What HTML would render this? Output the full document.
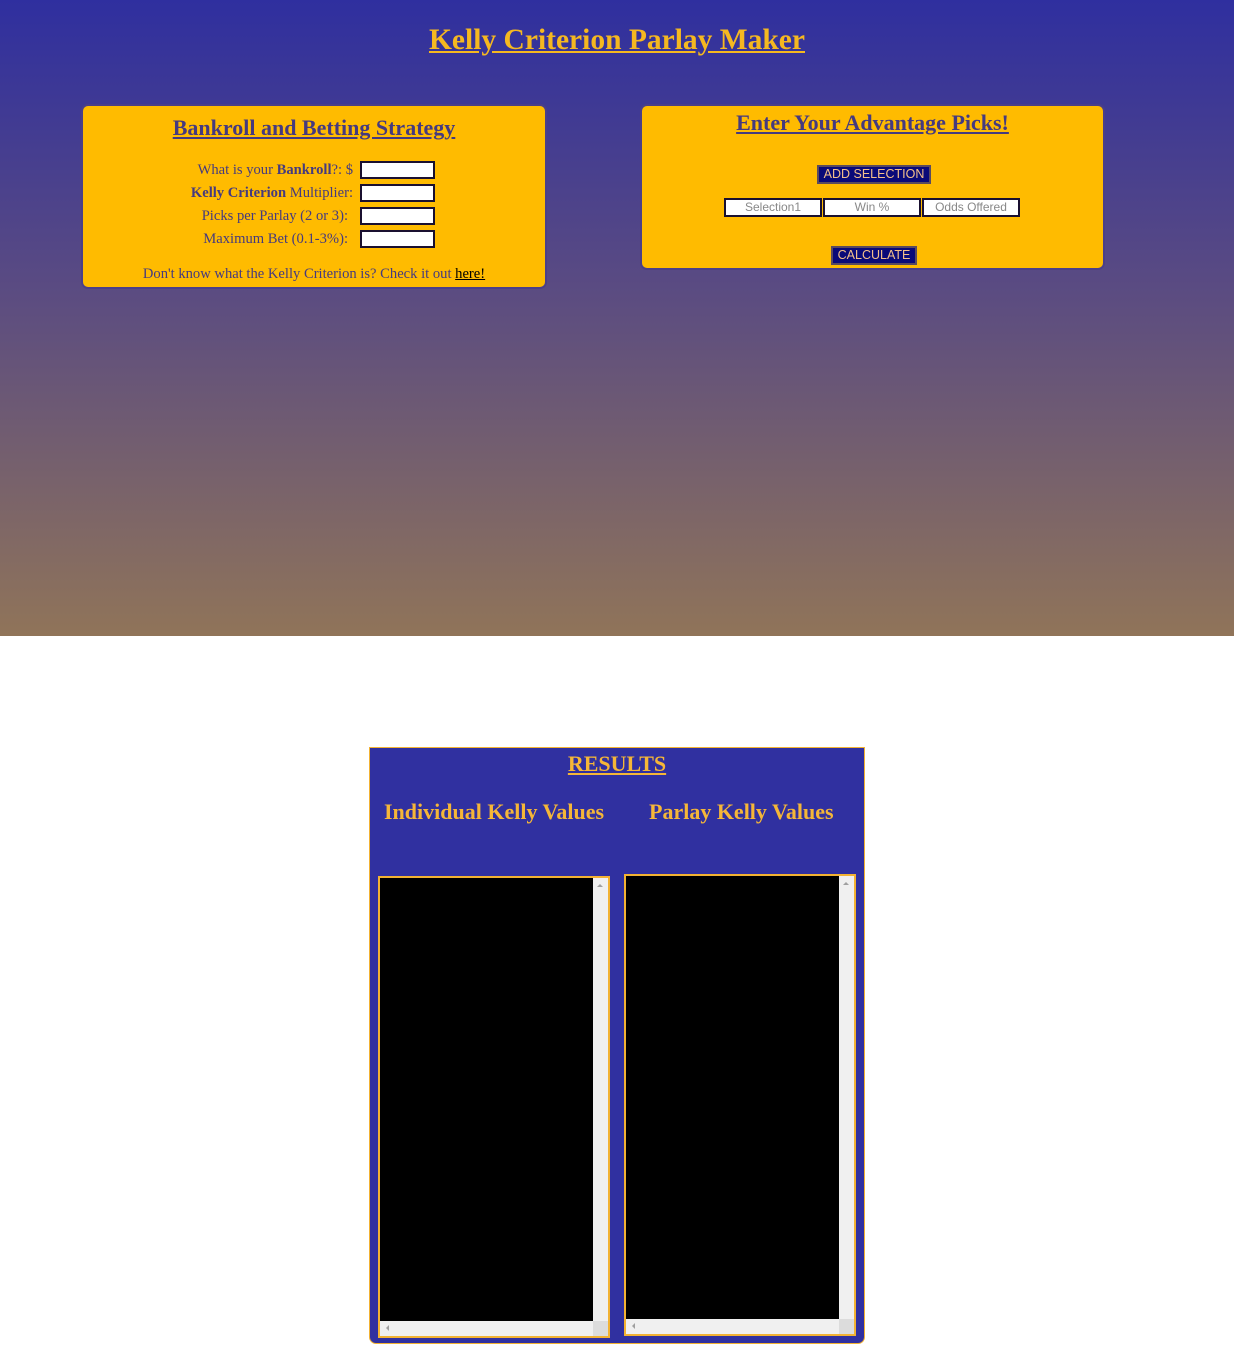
<!DOCTYPE html>
<html><head><style>
body{margin:0;width:1234px;height:1352px;position:relative;background:#fff;font-family:"Liberation Serif",serif;overflow:hidden}
.bg{position:absolute;left:0;top:0;width:1234px;height:636px;background:linear-gradient(#2f2f9f,#5a4b82 45%,#907459)}
.a{position:absolute}
h1{position:absolute;left:0;width:1234px;top:24px;margin:0;text-align:center;color:#f5b820;font-size:29.5px;font-weight:bold;text-decoration:underline}
.box{position:absolute;background:#ffbb00;border:2px solid #4b3f88;border-radius:7px;box-sizing:border-box}
.h2{position:absolute;left:0;right:0;text-align:center;color:#453a7f;font-size:22px;font-weight:bold;text-decoration:underline}
.lbl{position:absolute;color:#453a7f;font-size:14.6px;text-align:right;width:270px;left:0}
.in{position:absolute;left:277px;width:75px;height:18px;background:#fff;border:2px solid #1a1030;box-sizing:border-box}
.btn{position:absolute;background:#0a0a78;border:2px solid #5a4a60;color:#f4c08a;font-family:"Liberation Sans",sans-serif;font-size:12.5px;text-align:center;box-sizing:border-box;line-height:15px}
.pi{position:absolute;top:92px;height:19px;width:98px;background:#fff;border:2px solid #1a1030;box-sizing:border-box;color:#888;font-family:"Liberation Sans",sans-serif;font-size:12px;text-align:center;line-height:15px}
.ta{position:absolute;border:2px solid #f2b233;background:#000;box-sizing:border-box}
.vs{position:absolute;right:0;top:0;width:15px;bottom:15px;background:#f0f0f0}
.hs{position:absolute;left:0;right:0;bottom:0;height:15px;background:#f0f0f0}
.cr{position:absolute;right:0;bottom:0;width:15px;height:15px;background:#dcdcdc}
.ar{position:absolute;width:0;height:0;border:3px solid transparent}
.gt{position:absolute;color:#f5b638;font-weight:bold;font-size:22px}
</style></head><body>
<div class="bg"></div>
<h1>Kelly Criterion Parlay Maker</h1>
<div class="box" style="left:81px;top:104px;width:466px;height:185px">
<div class="h2" style="top:9px">Bankroll and Betting Strategy</div>
<div class="lbl" style="top:56px">What is your <b>Bankroll</b>?: $</div><div class="in" style="top:55px"></div>
<div class="lbl" style="top:79px"><b>Kelly Criterion</b> Multiplier:</div><div class="in" style="top:78px"></div>
<div class="lbl" style="top:102px;width:265px">Picks per Parlay (2 or 3):</div><div class="in" style="top:101px"></div>
<div class="lbl" style="top:125px;width:265px">Maximum Bet (0.1-3%):</div><div class="in" style="top:124px"></div>
<div class="a" style="top:160px;left:0;right:0;text-align:center;color:#453a7f;font-size:14.6px">Don't know what the Kelly Criterion is? Check it out <u style="color:#000">here!</u></div>
</div>
<div class="box" style="left:640px;top:104px;width:465px;height:166px">
<div class="h2" style="top:4px">Enter Your Advantage Picks!</div>
<div class="btn" style="left:175px;top:59px;width:114px;height:19px">ADD SELECTION</div>
<div class="pi" style="left:82px">Selection1</div>
<div class="pi" style="left:181px">Win %</div>
<div class="pi" style="left:280px">Odds Offered</div>
<div class="btn" style="left:189px;top:140px;width:86px;height:19px">CALCULATE</div>
</div>
<div class="a" style="left:369px;top:747px;width:496px;height:597px;background:#3030a0;border:1px solid #f2b233;border-radius:0 0 7px 7px;box-sizing:border-box">
<div class="a" style="left:0;right:0;top:3px;text-align:center;color:#f5b638;font-weight:bold;font-size:22px;text-decoration:underline">RESULTS</div>
<div class="gt" style="left:14px;top:51px">Individual Kelly Values</div>
<div class="gt" style="left:279px;top:51px">Parlay Kelly Values</div>
</div>
<div class="ta" style="left:378px;top:876px;width:232px;height:462px"><div class="vs"><div class="ar" style="left:4px;top:3px;border-bottom-color:#a0a0a0"></div></div><div class="hs"><div class="ar" style="left:3px;top:4px;border-right-color:#a0a0a0"></div></div><div class="cr"></div></div>
<div class="ta" style="left:624px;top:874px;width:232px;height:462px"><div class="vs"><div class="ar" style="left:4px;top:3px;border-bottom-color:#a0a0a0"></div></div><div class="hs"><div class="ar" style="left:3px;top:4px;border-right-color:#a0a0a0"></div></div><div class="cr"></div></div>
</body></html>
